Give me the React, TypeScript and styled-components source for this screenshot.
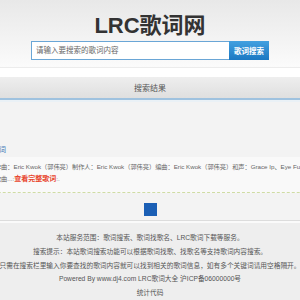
import React from "react";
import styled, { createGlobalStyle } from "styled-components";

const GlobalStyle = createGlobalStyle`
  html, body {
    margin: 0;
    padding: 0;
    background: #ffffff;
    overflow: hidden;
    font-family: "Liberation Sans", Arial, "Noto Sans CJK SC", sans-serif;
  }
`;

const Page = styled.div`
  width: 300px;
  height: 300px;
  display: flex;
  flex-direction: column;
  overflow: hidden;
`;

const Header = styled.header`
  height: 68px;
  box-sizing: border-box;
  padding-top: 13px;
  background: linear-gradient(#e8e8e8, #fbfbfb);
  border-bottom: 1px solid #ececec;
  display: flex;
  flex-direction: column;
  align-items: center;
`;

const Logo = styled.h1`
  margin: 0;
  font-size: 22px;
  line-height: 26px;
  font-weight: bold;
  color: #333333;
`;

const SearchForm = styled.form`
  margin-top: 2px;
  display: flex;
  height: 19px;
`;

const SearchInput = styled.input`
  width: 198px;
  height: 19px;
  box-sizing: border-box;
  border: 1px solid #6aa6d6;
  border-right: none;
  padding: 0 4px;
  font-family: inherit;
  font-size: 7.5px;
  color: #555;
  outline: none;
  background: #fff;
  &::placeholder {
    color: #666;
  }
`;

const SearchButton = styled.button`
  width: 40px;
  height: 19px;
  border: none;
  padding: 0;
  background: linear-gradient(#42a0e0, #1b78c2);
  color: #ffffff;
  font-family: inherit;
  font-size: 7.5px;
  font-weight: bold;
`;

const Results = styled.section`
  margin-top: 9px;
  display: flex;
  flex-direction: column;
  background: #f3f3f3;
  border-bottom: 1px solid #dcdcdc;
`;

const ResultsBar = styled.div`
  height: 21px;
  background: linear-gradient(#eeeeee, #dfdfdf);
  border-bottom: 2px solid #9fc2df;
  display: flex;
  align-items: center;
  justify-content: center;
  font-size: 8px;
  color: #555555;
`;

const ResultBody = styled.div`
  padding-top: 41px;
  padding-bottom: 4px;
  border-top: 2px solid #eaf1f6;
`;

const Item = styled.div`
  margin-left: -36px;
  width: 560px;
`;

const ItemTitle = styled.a`
  display: block;
  height: 14px;
  line-height: 14px;
  font-size: 7px;
  color: #3a78b5;
  text-decoration: none;
  white-space: nowrap;
`;

const ItemDesc = styled.div`
  padding: 4px 0 7px 36px;
  margin-left: -36px;
  background: #f9f9f9;
  border-bottom: 1px dashed #cfdca4;
`;

const DescLine = styled.p`
  margin: 0;
  height: 12px;
  line-height: 12px;
  font-size: 6.2px;
  color: #666666;
  white-space: nowrap;
`;

const MoreLink = styled.a`
  color: #e8452c;
  font-weight: bold;
  font-size: 7px;
  text-decoration: none;
`;

const Pager = styled.div`
  margin-top: 10px;
  display: flex;
  justify-content: center;
`;

const PageCurrent = styled.span<{ $active?: boolean }>`
  width: 13px;
  height: 13px;
  background: ${(p) => (p.$active ? "#1b5fb5" : "#ffffff")};
  display: block;
`;

const Footer = styled.footer`
  flex: 1;
  border-top: 2px solid #fafafa;
  background: #eeeeee;
  padding-top: 8px;
  display: flex;
  flex-direction: column;
  align-items: center;
`;

const FooterLine = styled.p`
  margin: 0;
  height: 13.75px;
  line-height: 13.75px;
  font-size: 6.7px;
  color: #555555;
  white-space: nowrap;
`;

export default function App() {
  return (
    <Page>
      <GlobalStyle />
      <Header>
        <Logo>LRC歌词网</Logo>
        <SearchForm onSubmit={(e) => e.preventDefault()}>
          <SearchInput placeholder="请输入要搜索的歌词内容" />
          <SearchButton type="submit">歌词搜索</SearchButton>
        </SearchForm>
      </Header>
      <Results>
        <ResultsBar>搜索结果</ResultsBar>
        <ResultBody>
          <Item>
            <ItemTitle href="#">富士山下歌词</ItemTitle>
            <ItemDesc>
              <DescLine>
                作词：林夕作曲：Eric Kwok（郭伟亮）制作人：Eric Kwok（郭伟亮）编曲：Eric Kwok（郭伟亮）和声：Grace Ip、Eye Fung吉他：Ted Lo
              </DescLine>
              <DescLine>
                陈奕迅演唱歌曲...:<MoreLink href="#">查看完整歌词</MoreLink>:.
              </DescLine>
            </ItemDesc>
          </Item>
          <Pager>
            <PageCurrent $active aria-label="1" />
          </Pager>
        </ResultBody>
      </Results>
      <Footer>
        <FooterLine>本站服务范围：歌词搜索、歌词找歌名、LRC歌词下载等服务。</FooterLine>
        <FooterLine>搜索提示：本站歌词搜索功能可以根据歌词找歌、找歌名等支持歌词内容搜索。</FooterLine>
        <FooterLine>只需在搜索栏里输入你要查找的歌词内容就可以找到相关的歌词信息，如有多个关键词请用空格隔开。</FooterLine>
        <FooterLine>Powered By www.dj4.com LRC歌词大全 沪ICP备06000000号</FooterLine>
        <FooterLine>统计代码</FooterLine>
      </Footer>
    </Page>
  );
}
